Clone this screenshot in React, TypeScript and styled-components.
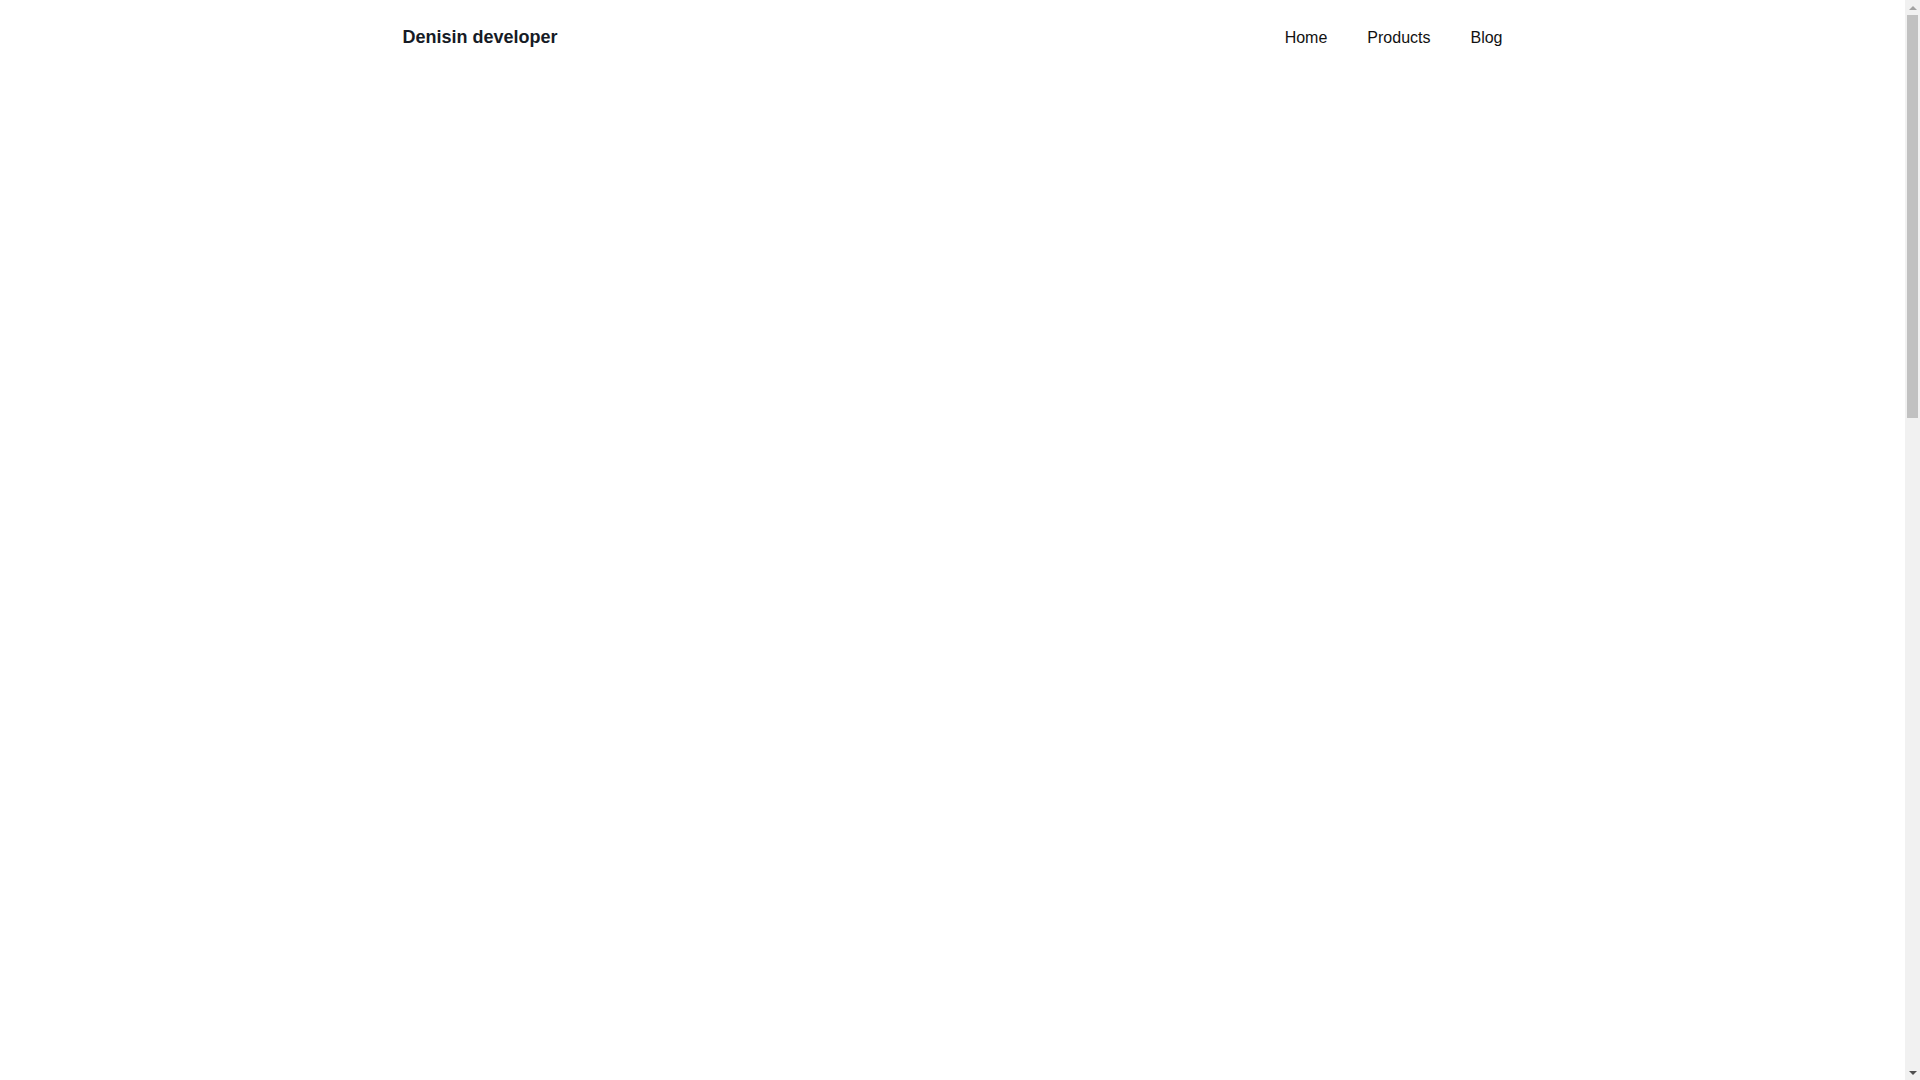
import React from "react";
import styled, { createGlobalStyle } from "styled-components";

const GlobalStyle = createGlobalStyle`
  html, body {
    margin: 0;
    padding: 0;
    background: #ffffff;
  }
  body {
    font-family: "Liberation Sans", Arial, sans-serif;
    color: #111111;
  }
  * { box-sizing: border-box; }
`;

const Page = styled.div`
  display: flex;
  flex-direction: column;
  min-height: 2810px;
  padding-right: 15px;
`;

const Header = styled.header`
  width: 100%;
`;

const HeaderInner = styled.div`
  max-width: 1100px;
  margin: 0 auto;
  height: 75px;
  display: flex;
  align-items: center;
  justify-content: space-between;
`;

const Logo = styled.a`
  font-size: 18px;
  font-weight: 700;
  color: #161b26;
  text-decoration: none;
`;

const Nav = styled.nav`
  display: flex;
  align-items: center;
  gap: 40px;
`;

const NavLink = styled.a`
  font-size: 16px;
  color: #111111;
  text-decoration: none;
`;

const Main = styled.main`
  flex: 1;
`;

/* Visual stand-in for the classic browser scrollbar seen in the reference */
const ScrollTrack = styled.div`
  position: fixed;
  top: 0;
  right: 0;
  width: 15px;
  height: 100vh;
  background: #f1f1f1;
  display: flex;
  flex-direction: column;
  align-items: center;
`;

const ScrollArrow = styled.div<{ $down?: boolean }>`
  width: 15px;
  height: 15px;
  display: flex;
  align-items: center;
  justify-content: center;
  flex-shrink: 0;
  &::before {
    content: "";
    width: 0;
    height: 0;
    border-left: 4px solid transparent;
    border-right: 4px solid transparent;
    ${(p) =>
      p.$down
        ? "border-top: 4px solid #505050;"
        : "border-bottom: 4px solid #a3a3a3;"}
  }
`;

const ScrollArea = styled.div`
  flex: 1;
  width: 100%;
  padding: 0 2px;
`;

const ScrollThumb = styled.div`
  width: 100%;
  height: 403px;
  background: #c1c1c1;
`;

export default function App() {
  return (
    <>
      <GlobalStyle />
      <Page>
        <Header>
          <HeaderInner>
            <Logo href="#">Denisin developer</Logo>
            <Nav>
              <NavLink href="#">Home</NavLink>
              <NavLink href="#">Products</NavLink>
              <NavLink href="#">Blog</NavLink>
            </Nav>
          </HeaderInner>
        </Header>
        <Main />
      </Page>
      <ScrollTrack aria-hidden="true">
        <ScrollArrow />
        <ScrollArea>
          <ScrollThumb />
        </ScrollArea>
        <ScrollArrow $down />
      </ScrollTrack>
    </>
  );
}
